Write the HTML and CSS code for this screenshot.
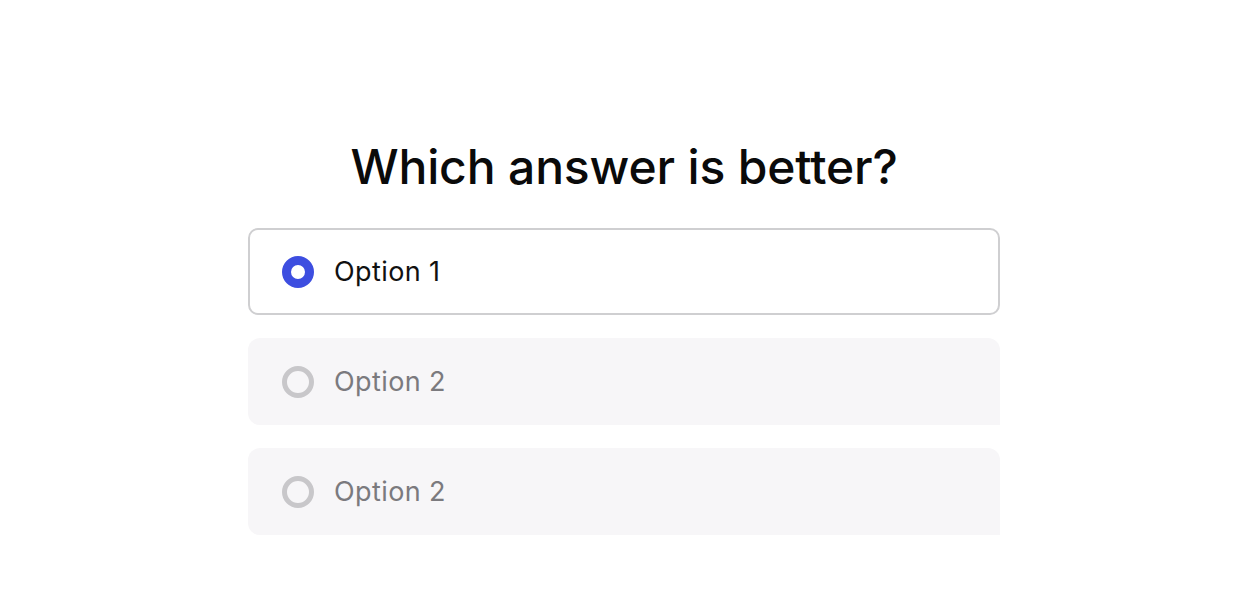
FILE: index.html
```html
<!DOCTYPE html>
<html>
<head>
<meta charset="utf-8">
<link rel="stylesheet" href="styles.css">
</head>
<body>
<main class="page">
  <h1 class="title">Which answer is better?</h1>
  <div class="options">
    <div class="option selected">
      <span class="radio on"></span>
      <span class="label">Option 1</span>
    </div>
    <div class="option muted">
      <span class="radio off"></span>
      <span class="label">Option 2</span>
    </div>
    <div class="option muted">
      <span class="radio off"></span>
      <span class="label">Option 2</span>
    </div>
  </div>
</main>
</body>
</html>
```
FILE: styles.css
```css
html, body {
  margin: 0;
  padding: 0;
  background: #ffffff;
}
body {
  font-family: "Inter", "Noto Sans", sans-serif;
  width: 1246px;
  height: 596px;
  overflow: hidden;
}
.page {
  display: flex;
  flex-direction: column;
  align-items: center;
  padding-top: 138px;
  padding-left: 2px;
}
.title {
  margin: 0;
  font-size: 48px;
  font-weight: 500;
  letter-spacing: -0.15px;
  color: #0a0a0a;
  line-height: 58px;
}
.options {
  margin-top: 32px;
  width: 752px;
  display: flex;
  flex-direction: column;
  gap: 23px;
}
.option {
  box-sizing: border-box;
  height: 87px;
  display: flex;
  align-items: center;
  padding-left: 34px;
  gap: 20px;
  border-radius: 10px;
}
.selected {
  border: 2px solid #cfcfd1;
  background: #ffffff;
  padding-left: 32px;
}
.muted {
  background: #f7f6f8;
  border-radius: 12px 12px 0 12px;
}
.label {
  font-size: 27px;
  font-weight: 400;
  letter-spacing: 0.4px;
}
.selected .label { color: #111111; }
.muted .label { color: #7b7a7e; }
.radio {
  box-sizing: border-box;
  width: 32px;
  height: 32px;
  border-radius: 50%;
  flex: none;
}
.radio.on {
  border: 9px solid #3d4ee0;
  background: #ffffff;
}
.radio.off {
  border: 5px solid #c8c7ca;
  background: #f7f6f8;
}
```
